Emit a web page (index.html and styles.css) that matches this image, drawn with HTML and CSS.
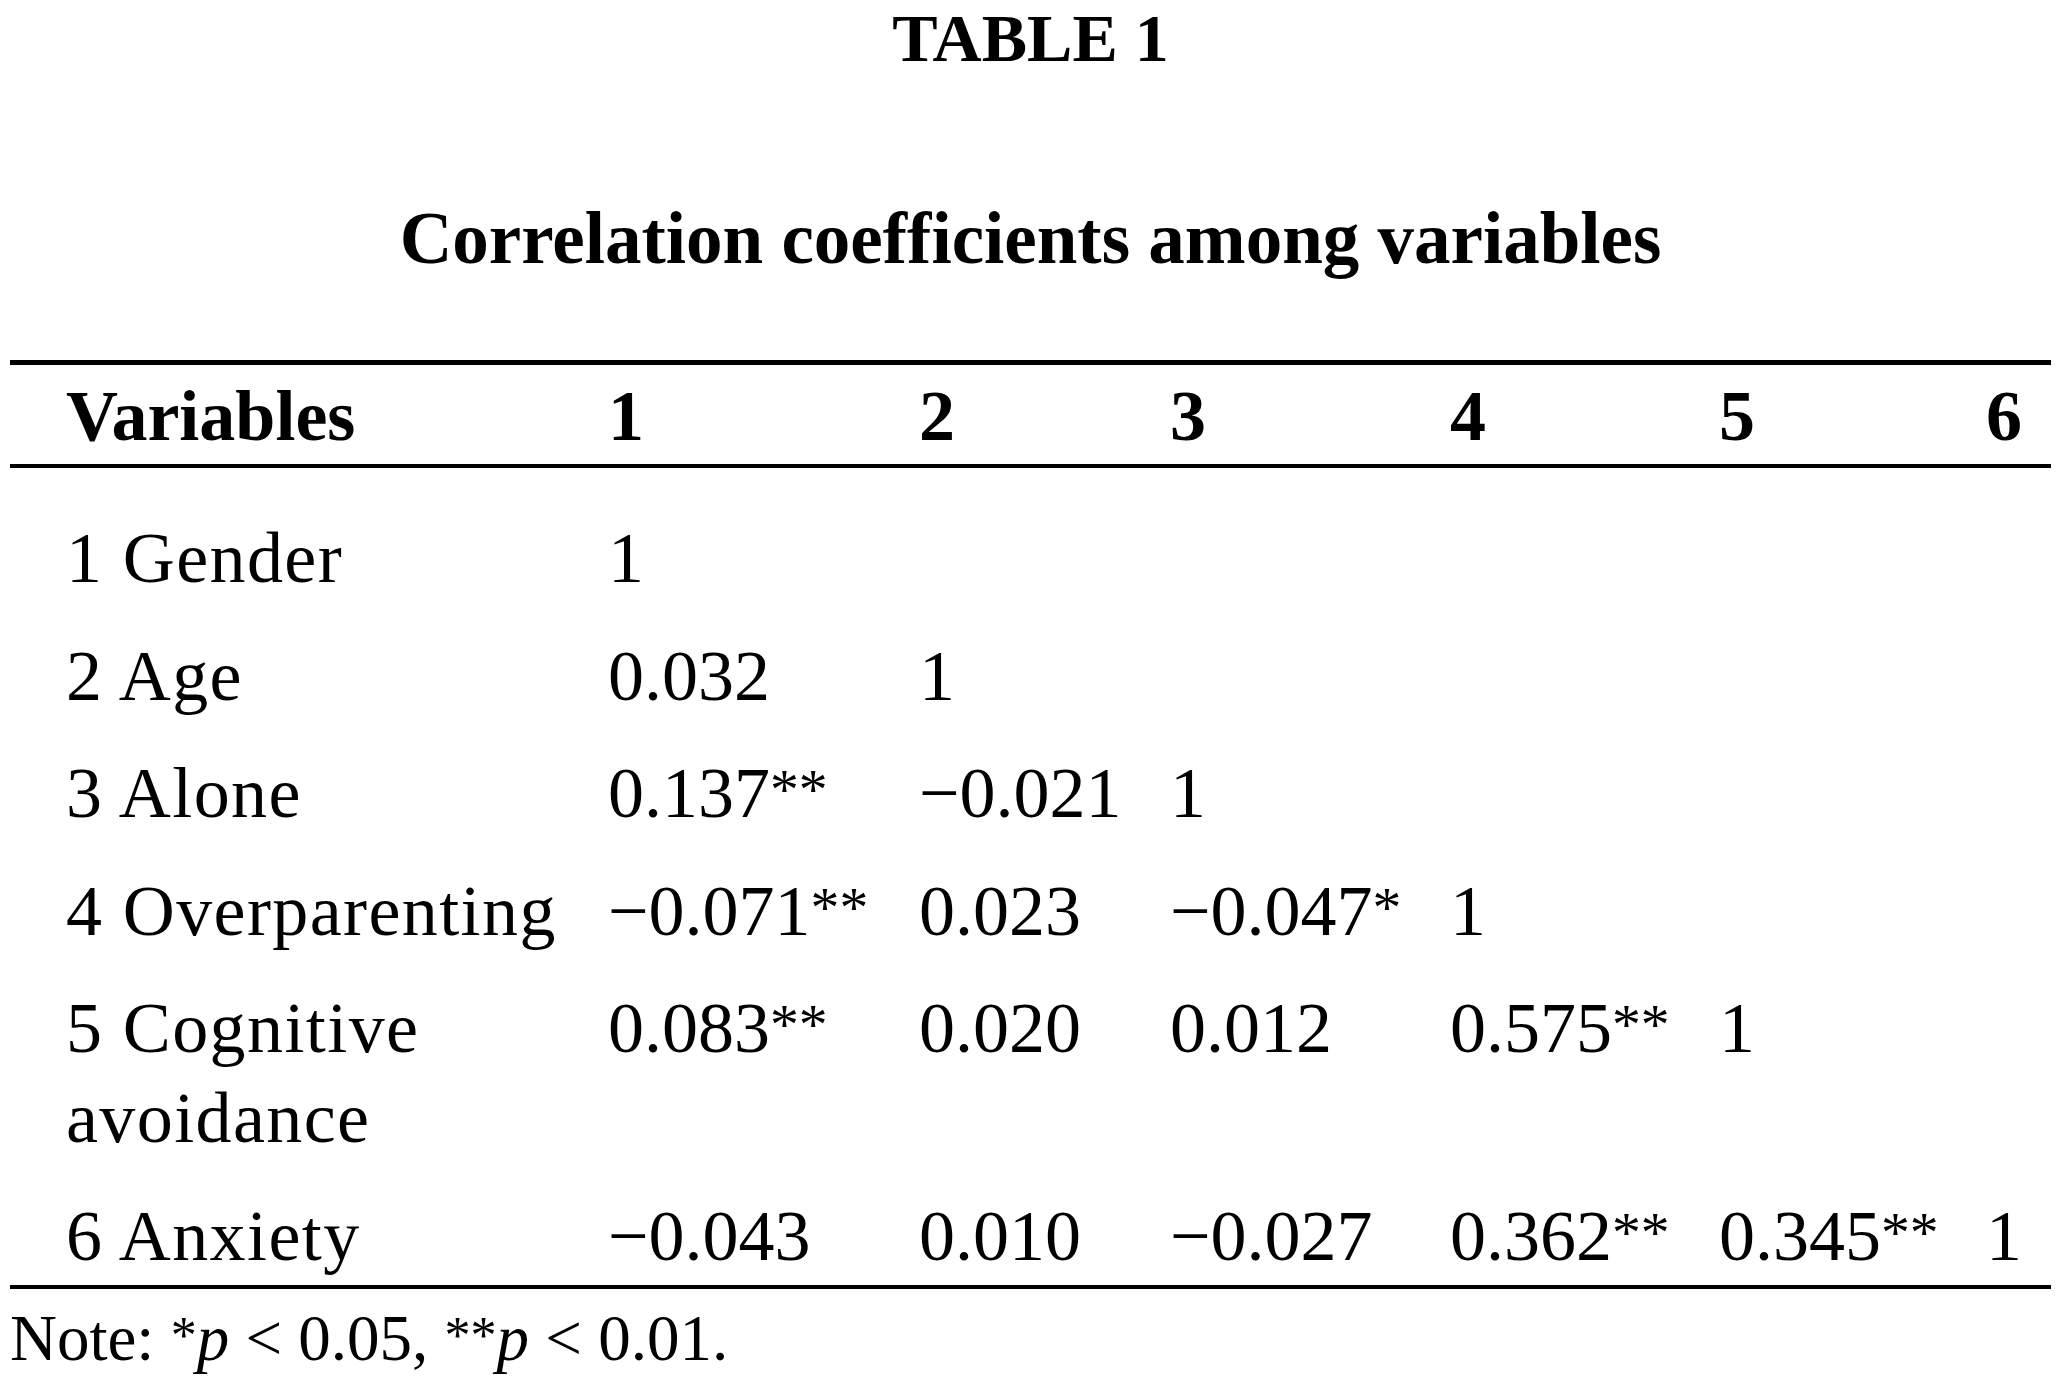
FILE: index.html
```html
<!DOCTYPE html>
<html lang="en">
<head>
<meta charset="utf-8">
<title>Table 1 – Correlation coefficients among variables</title>
<link rel="stylesheet" href="styles.css">
</head>
<body>
<div class="page">
  <h1 class="title">TABLE 1</h1>
  <h2 class="subtitle">Correlation coefficients among variables</h2>
  <table class="corr">
    <colgroup>
      <col class="c-var">
      <col class="c-1">
      <col class="c-2">
      <col class="c-3">
      <col class="c-4">
      <col class="c-5">
      <col class="c-6">
    </colgroup>
    <thead>
      <tr>
        <th class="var">Variables</th>
        <th>1</th>
        <th>2</th>
        <th>3</th>
        <th>4</th>
        <th>5</th>
        <th>6</th>
      </tr>
    </thead>
    <tbody>
      <tr>
        <td class="var">1 Gender</td>
        <td>1</td>
        <td></td>
        <td></td>
        <td></td>
        <td></td>
        <td></td>
      </tr>
      <tr>
        <td class="var">2 Age</td>
        <td>0.032</td>
        <td>1</td>
        <td></td>
        <td></td>
        <td></td>
        <td></td>
      </tr>
      <tr>
        <td class="var">3 Alone</td>
        <td>0.137<span class="sig">**</span></td>
        <td>&minus;0.021</td>
        <td>1</td>
        <td></td>
        <td></td>
        <td></td>
      </tr>
      <tr>
        <td class="var">4 Overparenting</td>
        <td>&minus;0.071<span class="sig">**</span></td>
        <td>0.023</td>
        <td>&minus;0.047<span class="sig">*</span></td>
        <td>1</td>
        <td></td>
        <td></td>
      </tr>
      <tr>
        <td class="var">5 Cognitive avoidance</td>
        <td>0.083<span class="sig">**</span></td>
        <td>0.020</td>
        <td>0.012</td>
        <td>0.575<span class="sig">**</span></td>
        <td>1</td>
        <td></td>
      </tr>
      <tr>
        <td class="var">6 Anxiety</td>
        <td>&minus;0.043</td>
        <td>0.010</td>
        <td>&minus;0.027</td>
        <td>0.362<span class="sig">**</span></td>
        <td>0.345<span class="sig">**</span></td>
        <td>1</td>
      </tr>
    </tbody>
  </table>
  <p class="note">Note: <span class="sig">*</span><i>p</i> &lt; 0.05, <span class="sig">**</span><i>p</i> &lt; 0.01.</p>
</div>
</body>
</html>
```

FILE: styles.css
```css
html, body {
  margin: 0;
  padding: 0;
  background: #ffffff;
}

body {
  font-family: "Liberation Serif", "Times New Roman", serif;
  color: #000000;
}

.page {
  padding: 0 10px;
}

.title {
  margin: 0;
  font-size: 68px;
  line-height: 76px;
  font-weight: bold;
  text-align: center;
}

.subtitle {
  margin: 118px 0 0;
  font-size: 73px;
  line-height: 90px;
  font-weight: bold;
  text-align: center;
}

.corr {
  margin-top: 76px;
  width: 2041px;
  table-layout: fixed;
  border-collapse: separate;
  border-spacing: 0;
  font-size: 72px;
  line-height: 90px;
}

.c-var { width: 598px; }
.c-1 { width: 311px; }
.c-2 { width: 251px; }
.c-3 { width: 280px; }
.c-4 { width: 269px; }
.c-5 { width: 267px; }
.c-6 { width: 65px; }

.corr th,
.corr td {
  text-align: left;
  vertical-align: top;
  white-space: nowrap;
  padding: 0;
}

.corr th {
  font-weight: bold;
  padding-top: 6px;
  padding-bottom: 3px;
  border-top: 5px solid #000;
  border-bottom: 4px solid #000;
}

.corr td {
  font-weight: normal;
  padding-top: 27.5px;
}

.corr tbody tr:first-child td {
  padding-top: 45px;
}

.corr tbody tr:last-child td {
  padding-bottom: 4.5px;
  border-bottom: 4px solid #000;
}

.corr .var {
  padding-left: 56px;
  white-space: normal;
}

.corr td.var {
  letter-spacing: 1.4px;
}

.sig {
  font-size: 0.8em;
  line-height: 0;
  vertical-align: 8px;
  letter-spacing: 0;
}

.note {
  margin: 11px 0 0;
  font-size: 65px;
  line-height: 76px;
}

.note .sig {
  vertical-align: 7px;
}
```
